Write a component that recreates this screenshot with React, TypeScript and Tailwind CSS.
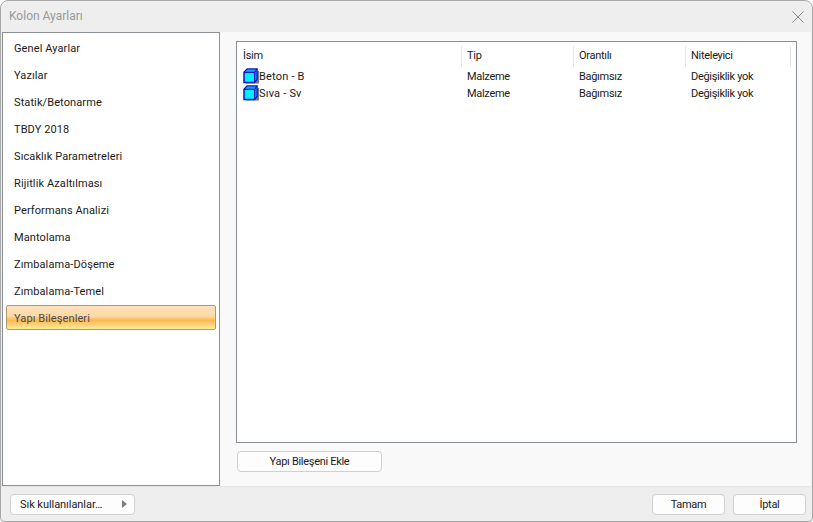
const items = ["Genel Ayarlar","Yazılar","Statik/Betonarme","TBDY 2018","Sıcaklık Parametreleri","Rijitlik Azaltılması","Performans Analizi","Mantolama","Zımbalama-Döşeme","Zımbalama-Temel"];
const rows = [["Beton - B"],["Sıva - Sv"]];

function Cube() {
  return (
    <svg width="16" height="16" viewBox="0 0 16 16" className="shrink-0 -mt-[4px]">
      <path d="M12 3 H16 V15.5 H3 V13 H12 Z" fill="#77776e" />
      <path d="M1 4.2 L4.2 1 H14 V11.5 L11.5 14.6 H1 Z" fill="#00f0ff" stroke="#0818c8" strokeWidth="1.5" />
      <path d="M2 4 L4.6 1.8 H13 L11 4 Z" fill="#1fa0f0" />
      <path d="M12.2 4.6 L13.3 3 V11 L12.2 12.6 Z" fill="#1488e0" />
      <path d="M1 4.4 H11.6 V14.6 M11.6 4.4 L14 1" fill="none" stroke="#0818c8" strokeWidth="1.3" />
    </svg>
  );
}

function Btn({ className, children }: { className: string; children: React.ReactNode }) {
  return (
    <div className={"h-[21px] flex items-center rounded-[4px] border border-[#d0d0d0] bg-[#fdfdfd] text-[#1a1a1a] " + className}>
      {children}
    </div>
  );
}

export default function App() {
  return (
    <div className="w-[813px] h-[522px] bg-white text-[11px] tracking-[-0.3px] text-[#1a1a1a] font-['Roboto',sans-serif]">
      <div className="w-full h-full flex flex-col rounded-t-[8px] rounded-b-[4px] border border-[#a9a9a9] bg-[#eeeeee] overflow-hidden">
        <div className="h-[31px] shrink-0 flex items-center justify-between pl-[8px] pr-[8px]">
          <span className="text-[12px] tracking-normal text-[#9a9a9a] -mt-[1px]">Kolon Ayarları</span>
          <svg width="12" height="12" viewBox="0 0 12 12"><path d="M0.5 0.5 L11.5 11.5 M11.5 0.5 L0.5 11.5" stroke="#8a8a8a" strokeWidth="1" fill="none" /></svg>
        </div>
        <div className="flex-1 flex min-h-0 pl-[1px] pr-[1px]">
          <div className="w-[218px] shrink-0 border border-[#8b8f96] bg-white pt-[3px] px-[3px] tracking-[0.1px]">
            {items.map((t) => (
              <div key={t} className="h-[27px] flex items-center pl-[8px]">{t}</div>
            ))}
            <div className="h-[25px] -mt-[1px] pt-[3px] flex items-center pl-[7px] rounded-[2px] border border-[#b09a6c] text-[#4b4b50] bg-[linear-gradient(to_bottom,#fde3bd_0%,#fdd8a4_45%,#fbb850_62%,#fdd77e_85%,#feeb9c_100%)]">Yapı Bileşenleri</div>
          </div>
          <div className="flex-1 flex flex-col bg-[#f9f9f9] pl-[16px] pr-[14px] pt-[9px]">
            <div className="h-[402px] border border-[#8b8f96] bg-white flex flex-col">
              <div className="h-[25px] flex items-stretch mb-[2px] pt-[4px]">
                <div className="w-[225px] pl-[6px] flex items-center border-r border-[#e4e4e4]">İsim</div>
                <div className="w-[112px] pl-[5px] flex items-center border-r border-[#e4e4e4]">Tip</div>
                <div className="w-[112px] pl-[5px] flex items-center border-r border-[#e4e4e4]">Orantılı</div>
                <div className="w-[105px] pl-[5px] flex items-center border-r border-[#e4e4e4]">Niteleyici</div>
              </div>
              {rows.map(([n]) => (
                <div key={n} className="h-[17px] flex items-center">
                  <div className="w-[225px] pl-[6px] flex items-center">
                    <Cube />
                    <span className="tracking-[0.2px]">{n}</span>
                  </div>
                  <div className="w-[112px] pl-[5px]">Malzeme</div>
                  <div className="w-[112px] pl-[5px]">Bağımsız</div>
                  <div className="w-[105px] pl-[5px]">Değişiklik yok</div>
                </div>
              ))}
            </div>
            <Btn className="w-[145px] mt-[8px] ml-[1px] pt-[1px] justify-center">Yapı Bileşeni Ekle</Btn>
          </div>
        </div>
        <div className="h-[35px] shrink-0 flex items-center justify-between pl-[9px] pr-[6px] border-t border-[#e6e6e6]">
          <Btn className="w-[125px] pl-[9px] pr-[7px] pt-[2px] justify-between">
            <span className="tracking-[-0.05px]">Sık kullanılanlar…</span>
            <svg width="5" height="8" viewBox="0 0 5 8" className="-mt-[2px]"><path d="M0 0 L5 4 L0 8 Z" fill="#7d7d7d" /></svg>
          </Btn>
          <div className="flex gap-[8px]">
            <Btn className="w-[73px] pt-[2px] justify-center">Tamam</Btn>
            <Btn className="w-[73px] pt-[2px] justify-center">İptal</Btn>
          </div>
        </div>
      </div>
    </div>
  );
}
